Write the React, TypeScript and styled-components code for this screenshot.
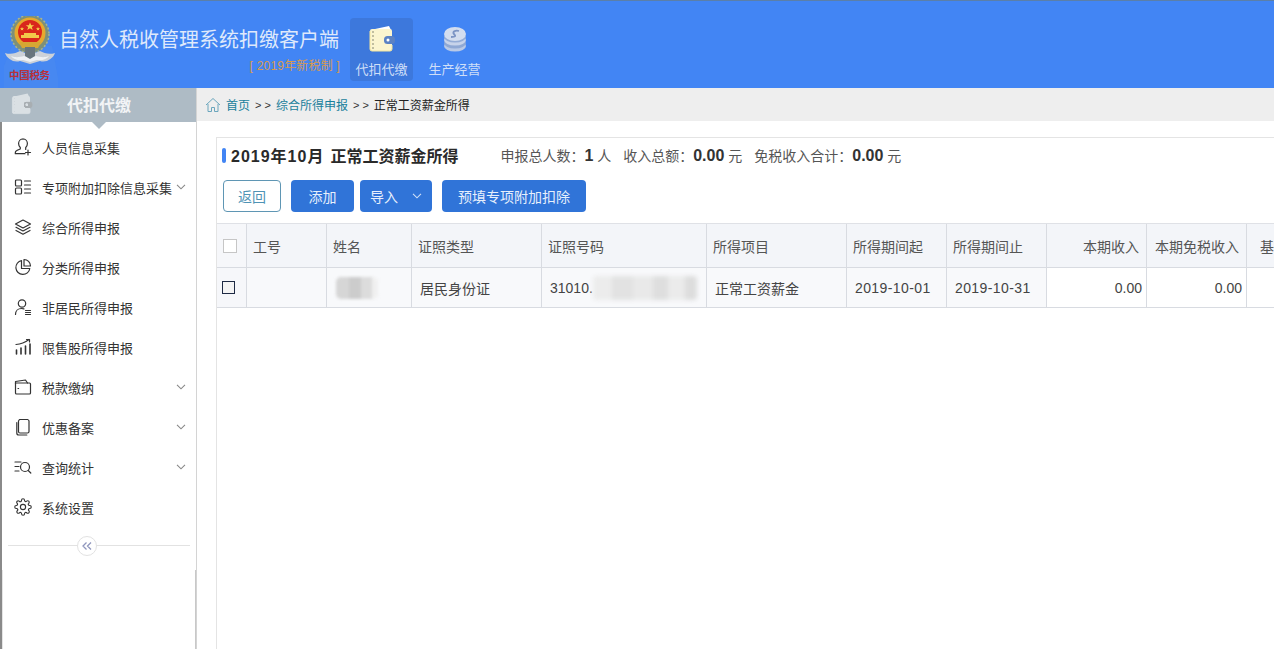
import styled, { createGlobalStyle } from 'styled-components'

const GlobalStyle = createGlobalStyle`
  html, body {
    margin: 0;
    padding: 0;
    height: 100%;
    overflow: hidden;
    background: #fff;
  }
  body {
    font-family: 'Liberation Sans', 'Noto Sans CJK SC', sans-serif;
  }
  #root {
    height: 100%;
  }
`

const stroke = {
  fill: 'none',
  stroke: '#333',
  strokeWidth: 1.2,
  strokeLinecap: 'round' as const,
  strokeLinejoin: 'round' as const,
}

const menuIcons: Record<string, any> = {
  person: (
    <svg width="18" height="18" viewBox="0 0 18 18" {...stroke}>
      <path d="M9 1c-2.600 0-4.400 2-4.400 4.500 0 1.800.7 3.100 1.700 4v1.500c-1.800.6-3.800 1.300-4.600 2.300-.5.700-.4 1.500-.4 2.400h9.700" />
      <path d="M9 1c2.600 0 4.400 2 4.400 4.500 0 1.800-.7 3.100-1.700 4v2" />
      <path d="M14 12v5M11.500 14.500h5" />
    </svg>
  ),
  list: (
    <svg width="18" height="18" viewBox="0 0 18 18" {...stroke}>
      <rect x="1.500" y="2" width="6" height="6" rx="1" />
      <rect x="1.500" y="10" width="6" height="6" rx="1" />
      <path d="M10.500 3h6M10.500 7h6M10.500 11h6M10.500 15h6" />
    </svg>
  ),
  layers: (
    <svg width="18" height="18" viewBox="0 0 18 18" {...stroke}>
      <path d="M9 2l7.500 4L9 10 1.500 6z" />
      <path d="M2 9.300L9 13l7-3.700M2 12.500L9 16.200l7-3.700" />
    </svg>
  ),
  pie: (
    <svg width="18" height="18" viewBox="0 0 18 18" {...stroke}>
      <path d="M7.500 2.600A7 7 0 1 0 15.800 10.500H7.500z" />
      <path d="M10 1.500a6.500 6.500 0 0 1 6.500 6.500H10z" />
    </svg>
  ),
  user: (
    <svg width="18" height="18" viewBox="0 0 18 18" {...stroke}>
      <circle cx="8" cy="5.500" r="3.700" />
      <path d="M1.500 16.500c0-3.600 2.600-6 6-6 .9 0 1.700.1 2.400.4" />
      <path d="M11.500 12.500h5M11.500 14.500h5M11.500 16.500h5" />
    </svg>
  ),
  chart: (
    <svg width="18" height="18" viewBox="0 0 18 18" {...stroke}>
      <path d="M2 6.500c4-.3 9-2 13-5M12.500 1.500H15.500V4" />
      <path d="M2.500 16v-4M7 16v-6M11.500 16V8M16 16V6" strokeWidth="1.600" />
    </svg>
  ),
  folder: (
    <svg width="18" height="18" viewBox="0 0 18 18" {...stroke}>
      <path d="M1.500 5.500V15a1 1 0 0 0 1 1h13a1 1 0 0 0 1-1V6a1 1 0 0 0-1-1H1.500z" />
      <path d="M1.500 5.500V3.500l10-1.500 2 3" />
      <path d="M4 10.500h.6" />
    </svg>
  ),
  doc: (
    <svg width="18" height="18" viewBox="0 0 18 18" {...stroke}>
      <path d="M5.500 1.500h8a2 2 0 0 1 1.500 1.500v10.500a1.500 1.500 0 0 1-1.500 1.500h-7.500a1.500 1.500 0 0 1-1.500-1.500V3z" />
      <path d="M2.800 4.500v10.500a2 2 0 0 0 2 2h8" />
    </svg>
  ),
  query: (
    <svg width="18" height="18" viewBox="0 0 18 18" {...stroke}>
      <path d="M1 4h6M1 8.500h4M1 13h4" />
      <circle cx="11" cy="9" r="4.500" />
      <path d="M14.200 12.500L16.800 15" />
    </svg>
  ),
  gear: (
    <svg width="18" height="18" viewBox="0 0 24 24" {...stroke} strokeWidth="1.500">
      <circle cx="12" cy="12" r="3.500" />
      <path d="M19.400 15a1.650 1.650 0 0 0 .33 1.820l.06.06a2 2 0 1 1-2.830 2.830l-.06-.06a1.650 1.650 0 0 0-2.820 1.170V21a2 2 0 1 1-4 0v-.09a1.650 1.650 0 0 0-2.800-1.170l-.06.06a2 2 0 1 1-2.830-2.830l.06-.06A1.650 1.650 0 0 0 3.090 14H3a2 2 0 1 1 0-4h.09a1.650 1.650 0 0 0 1.170-2.800l-.06-.06a2 2 0 1 1 2.830-2.830l.06.06A1.650 1.650 0 0 0 10 3.090V3a2 2 0 1 1 4 0v.09a1.650 1.650 0 0 0 2.800 1.170l.06-.06a2 2 0 1 1 2.830 2.830l-.06.06A1.650 1.650 0 0 0 20.910 10H21a2 2 0 1 1 0 4h-.09a1.650 1.650 0 0 0-1.510 1z" />
    </svg>
  ),
}

const menuItems = [
  { icon: 'person', label: '人员信息采集' },
  { icon: 'list', label: '专项附加扣除信息采集', arrow: true },
  { icon: 'layers', label: '综合所得申报' },
  { icon: 'pie', label: '分类所得申报' },
  { icon: 'user', label: '非居民所得申报' },
  { icon: 'chart', label: '限售股所得申报' },
  { icon: 'folder', label: '税款缴纳', arrow: true },
  { icon: 'doc', label: '优惠备案', arrow: true },
  { icon: 'query', label: '查询统计', arrow: true },
  { icon: 'gear', label: '系统设置' },
]

const columns = [
  { label: '工号', width: 80 },
  { label: '姓名', width: 85 },
  { label: '证照类型', width: 130 },
  { label: '证照号码', width: 165 },
  { label: '所得项目', width: 140 },
  { label: '所得期间起', width: 100 },
  { label: '所得期间止', width: 100 },
  { label: '本期收入', width: 100, right: true },
  { label: '本期免税收入', width: 100, right: true },
  { label: '基', width: 100, indent: true },
]

const Emblem = () => (
  <svg width="54" height="72" viewBox="0 0 54 72">
    <path d="M0 50L8 30h40l8 42H0z" fill="#4b8bee" opacity="0.5" />
    {/* wreath */}
    <circle cx="26" cy="18" r="19" fill="#7d9078" />
    <circle cx="26" cy="18" r="19" fill="none" stroke="#a9b48f" strokeWidth="1.500" strokeDasharray="2 2" />
    {/* gold ring and red disk */}
    <circle cx="26" cy="17" r="15.500" fill="#e6a92e" />
    <circle cx="26" cy="16" r="12" fill="#d9261c" />
    <path d="M26 6.500l1.200 2.800h3l-2.400 1.800.9 2.900-2.700-1.700-2.700 1.700.9-2.900-2.400-1.800h3z" fill="#f5cf4a" />
    <path d="M18 11l.6 1.300h1.400l-1.100.9.400 1.400-1.300-.8-1.300.8.400-1.400-1.100-.9h1.400zM34 11l.6 1.300H36l-1.100.9.400 1.400-1.300-.8-1.300.8.400-1.400-1.100-.9h1.400z" fill="#f5cf4a" />
    <path d="M17 19h18v3H17zM20 17h12v2H20z" fill="#f2c84a" />
    <path d="M15 26h22l-3 6H18z" fill="#d6a733" />
    {/* ribbons */}
    <path d="M1 37c6 2 11 0 15-2l10 4 10-4c4 2 9 4 15 2-2 6-9 10-15 8l-10 3-10-3c-6 2-13-2-15-8z" fill="#ccd1d8" />
    <path d="M7 40c5 2 9 1 13 0l6 2 6-2c4 1 8 2 13 0-2 3-7 5-12 4l-7 2-7-2c-5 1-10-1-12-4z" fill="#eef1f4" />
    <path d="M21 31h10v9l-5 3-5-3z" fill="#68757d" />
    <text x="5" y="63" fontFamily="'Noto Sans CJK SC', sans-serif" fontSize="10.500" fontWeight="700" fill="#b8313a" letterSpacing="-0.300">中国税务</text>
  </svg>
)

const WalletIcon = ({ size = 30 }: { size?: number }) => (
  <svg width={size} height={size} viewBox="0 0 30 30">
    <path d="M8 5l14-3 2 4z" fill="#fff" />
    <rect x="3" y="5" width="22" height="22" rx="2" fill="#fbf5cf" />
    <path d="M3 7v18a2 2 0 0 0 2 2h18a2 2 0 0 0 2-2v-4" fill="none" stroke="#f4e59c" strokeWidth="1" />
    <rect x="17" y="12" width="11" height="8" rx="3.500" fill="#5b82c4" />
    <circle cx="21" cy="16" r="1.500" fill="#fff" />
    <path d="M6 7v18" stroke="#9a9a80" strokeWidth="1.200" strokeDasharray="2 2" />
  </svg>
)

const CoinsIcon = () => (
  <svg width="28" height="28" viewBox="0 0 28 28">
    <ellipse cx="14" cy="21" rx="11" ry="5.500" fill="#b9c9e6" />
    <ellipse cx="14" cy="18" rx="11" ry="5.500" fill="#8fa8d4" />
    <ellipse cx="14" cy="15" rx="11" ry="5.500" fill="#c7d3ea" />
    <ellipse cx="14" cy="12" rx="11" ry="5.500" fill="#94acd6" />
    <ellipse cx="14" cy="9" rx="11" ry="7" fill="#d3ddef" />
    <path d="M18 6c-4-1-7 1-5 3s2 3-3 3" fill="none" stroke="#7c94c4" strokeWidth="1.800" />
  </svg>
)

const HomeIcon = () => (
  <svg width="16" height="16" viewBox="0 0 16 16" fill="none" stroke="#6ba6bd" strokeWidth="1">
    <path d="M1 8l7-6.500L15 8" />
    <path d="M3 7v7.500h3.500v-4h3v4H13V7" />
  </svg>
)

const Chevron = ({ color = '#888' }: { color?: string }) => (
  <svg width="10" height="6" viewBox="0 0 10 6" fill="none" stroke={color} strokeWidth="1.100">
    <path d="M1 .8l4 4 4-4" />
  </svg>
)

const Collapse = () => (
  <svg width="10" height="8" viewBox="0 0 10 8" fill="none" stroke="#8f96bd" strokeWidth="1.300">
    <path d="M4.500.5L1 4l3.500 3.500M9 .5L5.500 4 9 7.500" />
  </svg>
)

export default function App() {
  return (
    <Page>
      <GlobalStyle />
      <Header>
        <LogoCell>
          <Emblem />
        </LogoCell>
        <TitleBlock>
          <AppTitle>自然人税收管理系统扣缴客户端</AppTitle>
          <Edition>[ 2019年新税制 ]</Edition>
        </TitleBlock>
        <NavTab $active>
          <NavIcon>
            <WalletIcon />
          </NavIcon>
          <NavLabel>代扣代缴</NavLabel>
        </NavTab>
        <NavTab>
          <NavIcon>
            <CoinsIcon />
          </NavIcon>
          <NavLabel>生产经营</NavLabel>
        </NavTab>
      </Header>
      <Body>
        <Sidebar>
          <SideHead>
            <SideHeadIcon>
              <WalletIcon size={24} />
            </SideHeadIcon>
            <SideHeadTitle>代扣代缴</SideHeadTitle>
          </SideHead>
          <Menu>
            {menuItems.map((item) => (
              <MenuRow key={item.label}>
                <MenuIcon>{menuIcons[item.icon]}</MenuIcon>
                <MenuLabel>{item.label}</MenuLabel>
                {item.arrow && (
                  <MenuArrow>
                    <Chevron />
                  </MenuArrow>
                )}
              </MenuRow>
            ))}
          </Menu>
          <CollapseLine>
            <CollapseBtn>
              <Collapse />
            </CollapseBtn>
          </CollapseLine>
          <SideFoot />
        </Sidebar>
        <Main>
          <Crumbs>
            <HomeIcon />
            <CrumbLink>首页</CrumbLink>
            <CrumbSep>&gt; &gt;</CrumbSep>
            <CrumbLink>综合所得申报</CrumbLink>
            <CrumbSep>&gt; &gt;</CrumbSep>
            <CrumbNow>正常工资薪金所得</CrumbNow>
          </Crumbs>
          <Panel>
            <Summary>
              <Mark />
              <PanelPeriod>2019年10月</PanelPeriod>
              <PanelTitle>正常工资薪金所得</PanelTitle>
              <Stats>
                <span>
                  申报总人数：<b>1</b> 人
                </span>
                <span>
                  收入总额：<b>0.00</b> 元
                </span>
                <span>
                  免税收入合计：<b>0.00</b> 元
                </span>
              </Stats>
            </Summary>
            <Actions>
              <GhostBtn>返回</GhostBtn>
              <Btn $w={63}>添加</Btn>
              <Btn $w={72}>
                导入
                <BtnArrow>
                  <Chevron color="#cfe0f7" />
                </BtnArrow>
              </Btn>
              <WideBtn $w={144}>预填专项附加扣除</WideBtn>
            </Actions>
            <Table>
              <HeadRow>
                <CheckCell>
                  <HeadBox />
                </CheckCell>
                {columns.map((c) => (
                  <HeadCell key={c.label} $w={c.width} $right={c.right} $indent={c.indent}>
                    {c.label}
                  </HeadCell>
                ))}
              </HeadRow>
              <DataRow>
                <CheckCell>
                  <RowBox />
                </CheckCell>
                <Cell $w={80} />
                <Cell $w={85}>
                  <NameBlur />
                </Cell>
                <Cell $w={130}>居民身份证</Cell>
                <Cell $w={165}>
                  <IdText>31010.</IdText>
                  <IdBlur />
                </Cell>
                <Cell $w={140}>正常工资薪金</Cell>
                <DateCell $w={100}>2019-10-01</DateCell>
                <DateCell $w={100}>2019-10-31</DateCell>
                <Cell $w={100} $right $white>
                  0.00
                </Cell>
                <Cell $w={100} $right $white>
                  0.00
                </Cell>
                <Cell $w={100} $white />
              </DataRow>
            </Table>
          </Panel>
        </Main>
      </Body>
    </Page>
  )
}

const Page = styled.div`
  width: 1274px;
  height: 649px;
  display: flex;
  flex-direction: column;
  overflow: hidden;
`

const Header = styled.header`
  height: 88px;
  flex: none;
  display: flex;
  background: #4285f4;
  border-top: 1px solid #5b7fa8;
  box-sizing: border-box;
`

const LogoCell = styled.div`
  width: 59px;
  padding: 15px 0 0 4px;
  box-sizing: border-box;
`

const TitleBlock = styled.div`
  width: 290px;
  padding-top: 26px;
  box-sizing: border-box;
`

const AppTitle = styled.div`
  font-size: 20px;
  line-height: 27px;
  color: #dfe9fb;
  white-space: nowrap;
`

const Edition = styled.div`
  margin-top: 4px;
  padding-right: 9px;
  text-align: right;
  font-size: 12px;
  line-height: 16px;
  letter-spacing: 0.2px;
  color: #d89a4f;
`

const NavTab = styled.div<{ $active?: boolean }>`
  width: 63px;
  height: 63px;
  margin: 17px 9px 0 1px;
  display: flex;
  flex-direction: column;
  align-items: center;
  justify-content: flex-end;
  border-radius: 4px;
  background: ${(p) => (p.$active ? '#3d78dc' : 'transparent')};
  color: #cfdff8;
`

const NavIcon = styled.div`
  height: 30px;
  display: flex;
  align-items: center;
`

const NavLabel = styled.div`
  font-size: 13px;
  line-height: 16px;
  margin: 8px 0 3px;
  white-space: nowrap;
`

const Body = styled.div`
  flex: 1;
  display: flex;
  min-height: 0;
`

const Sidebar = styled.aside`
  width: 197px;
  flex: none;
  display: flex;
  flex-direction: column;
  box-sizing: border-box;
  border-left: 2px solid #8a8a8a;
  border-right: 1px solid #d4d4d4;
`

const SideHead = styled.div`
  position: relative;
  height: 34px;
  flex: none;
  margin-left: -2px;
  padding-bottom: 2px;
  box-sizing: border-box;
  display: flex;
  align-items: center;
  background: #aebbc5;

  &::after {
    content: '';
    position: absolute;
    left: 92px;
    bottom: -7px;
    border-left: 7px solid transparent;
    border-right: 7px solid transparent;
    border-top: 7px solid #aebbc5;
  }
`

const SideHeadIcon = styled.div`
  width: 67px;
  padding-left: 10px;
  box-sizing: border-box;
  display: flex;
  opacity: 0.55;
  filter: grayscale(1) brightness(1.3);
`

const SideHeadTitle = styled.div`
  font-size: 16px;
  font-weight: 700;
  color: #f2f4f6;
`

const Menu = styled.nav`
  padding-top: 7px;
  margin-top: -2px;
`

const MenuRow = styled.div`
  height: 40px;
  display: flex;
  align-items: center;
  padding-left: 12px;
`

const MenuIcon = styled.div`
  width: 18px;
  height: 18px;
  margin-right: 10px;
  display: flex;
`

const MenuLabel = styled.div`
  font-size: 13px;
  color: #333;
  white-space: nowrap;
`

const MenuArrow = styled.div`
  margin-left: auto;
  margin-right: 10px;
  margin-top: -1px;
  display: flex;
`

const CollapseLine = styled.div`
  position: relative;
  height: 1px;
  flex: none;
  margin: 18px 6px 0;
  background: #e2e2e2;
`

const CollapseBtn = styled.div`
  position: absolute;
  left: 69px;
  top: -9px;
  width: 18px;
  height: 18px;
  border: 1px solid #e2e2e2;
  border-radius: 50%;
  background: #fff;
  display: flex;
  align-items: center;
  justify-content: center;
`

const SideFoot = styled.div`
  flex: 1;
  margin: 24px 0 0 0;
  border-left: 1px solid #e4e4e4;
  border-right: 1px solid #c8c8c8;
`

const Main = styled.main`
  flex: 1;
  min-width: 0;
  overflow: hidden;
`

const Crumbs = styled.div`
  height: 33px;
  display: flex;
  align-items: center;
  gap: 5px;
  padding-left: 8px;
  background: #eeeeee;
  font-size: 12px;
`

const CrumbLink = styled.span`
  color: #1a7f9c;
`

const CrumbSep = styled.span`
  font-size: 11px;
  color: #333;
`

const CrumbNow = styled.span`
  color: #222;
`

const Panel = styled.section`
  margin: 16px 0 0 19px;
  height: 600px;
  border: 1px solid #e4e4e4;
  border-right: none;
`

const Summary = styled.div`
  height: 36px;
  box-sizing: border-box;
  padding: 0 0 2px 5px;
  display: flex;
  align-items: center;
`

const Mark = styled.div`
  width: 4px;
  height: 15px;
  border-radius: 2px;
  background: #4285f4;
  margin-right: 5px;
`

const PanelPeriod = styled.div`
  font-size: 16px;
  font-weight: 700;
  letter-spacing: 1px;
  color: #2a2a2a;
  white-space: nowrap;
  margin-right: 6px;
`

const PanelTitle = styled.div`
  font-size: 16px;
  font-weight: 700;
  color: #2a2a2a;
  white-space: nowrap;
`

const Stats = styled.div`
  margin-left: 42px;
  display: flex;
  gap: 12px;
  font-size: 14px;
  color: #555;
  white-space: nowrap;

  b {
    font-size: 16px;
    color: #333;
  }
`

const Actions = styled.div`
  height: 49px;
  box-sizing: border-box;
  padding: 6px 0 0 6px;
  display: flex;
  gap: 6px;
`

const GhostBtn = styled.div`
  width: 58px;
  height: 32px;
  margin-right: 4px;
  box-sizing: border-box;
  border: 1px solid #5f96b4;
  border-radius: 4px;
  display: flex;
  align-items: center;
  justify-content: center;
  font-size: 14px;
  color: #4f93b5;
`

const Btn = styled.div<{ $w: number }>`
  width: ${(p) => p.$w}px;
  height: 32px;
  border-radius: 4px;
  background: #3074d8;
  color: #e6effc;
  font-size: 14px;
  display: flex;
  align-items: center;
  justify-content: center;
`

const WideBtn = styled(Btn)`
  margin-left: 4px;
`

const BtnArrow = styled.span`
  margin-left: 14px;
  display: flex;
`

const Table = styled.div`
  width: 1110px;
  border-top: 1px solid #dfe1e6;
`

const HeadRow = styled.div`
  display: flex;
  height: 43px;
  background: #f3f5f9;
  border-bottom: 1px solid #d8dbe1;
`

const DataRow = styled.div`
  display: flex;
  height: 39px;
  border-bottom: 1px solid #d8dbe1;
`

const CheckCell = styled.div`
  width: 30px;
  flex: none;
  display: flex;
  align-items: center;
  justify-content: center;
  box-sizing: border-box;
  border-right: 1px solid #d8dbe1;
  background: #f6f7fa;
`

const HeadBox = styled.div`
  width: 14px;
  height: 14px;
  box-sizing: border-box;
  margin-right: 4px;
  background: #fff;
  border: 1px solid #c6c6c6;
`

const RowBox = styled.div`
  width: 13px;
  height: 13px;
  box-sizing: border-box;
  margin-right: 7px;
  background: #f4f4f4;
  border: 1px solid #1e2a44;
`

const HeadCell = styled.div<{ $w: number; $right?: boolean; $indent?: boolean }>`
  width: ${(p) => p.$w}px;
  flex: none;
  box-sizing: border-box;
  display: flex;
  align-items: center;
  justify-content: ${(p) => (p.$right ? 'flex-end' : 'flex-start')};
  padding: 0 7px 0 ${(p) => (p.$indent ? '13px' : '6px')};
  border-right: 1px solid #d8dbe1;
  font-size: 14px;
  color: #555;
  white-space: nowrap;
`

const Cell = styled.div<{ $w: number; $right?: boolean; $white?: boolean }>`
  width: ${(p) => p.$w}px;
  flex: none;
  box-sizing: border-box;
  display: flex;
  align-items: center;
  justify-content: ${(p) => (p.$right ? 'flex-end' : 'flex-start')};
  padding: 0 ${(p) => (p.$right ? '4px' : '8px')};
  border-right: 1px solid #d8dbe1;
  background: ${(p) => (p.$white ? '#fff' : '#f8f9fb')};
  font-size: 14px;
  color: #444;
  white-space: nowrap;
  overflow: hidden;
`

const DateCell = styled(Cell)`
  letter-spacing: 0.4px;
`

const IdText = styled.span`
  flex: none;
`

const NameBlur = styled.div`
  width: 42px;
  height: 22px;
  margin-left: 1px;
  flex: none;
  border-radius: 5px;
  background: linear-gradient(
    90deg,
    #d6d6d6 0 30%,
    #cccccc 30% 60%,
    #dcdcdc 60% 85%,
    #f0f0f0 85%
  );
  filter: blur(1.5px);
`

const IdBlur = styled.div`
  width: 104px;
  height: 24px;
  flex: none;
  border-radius: 4px;
  background: linear-gradient(
    90deg,
    #ececec 0 18%,
    #e2e2e2 18% 38%,
    #e9e9e9 38% 58%,
    #dedede 58% 72%,
    #ebebeb 72% 88%,
    #dddddd 88%
  );
  filter: blur(2px);
`
